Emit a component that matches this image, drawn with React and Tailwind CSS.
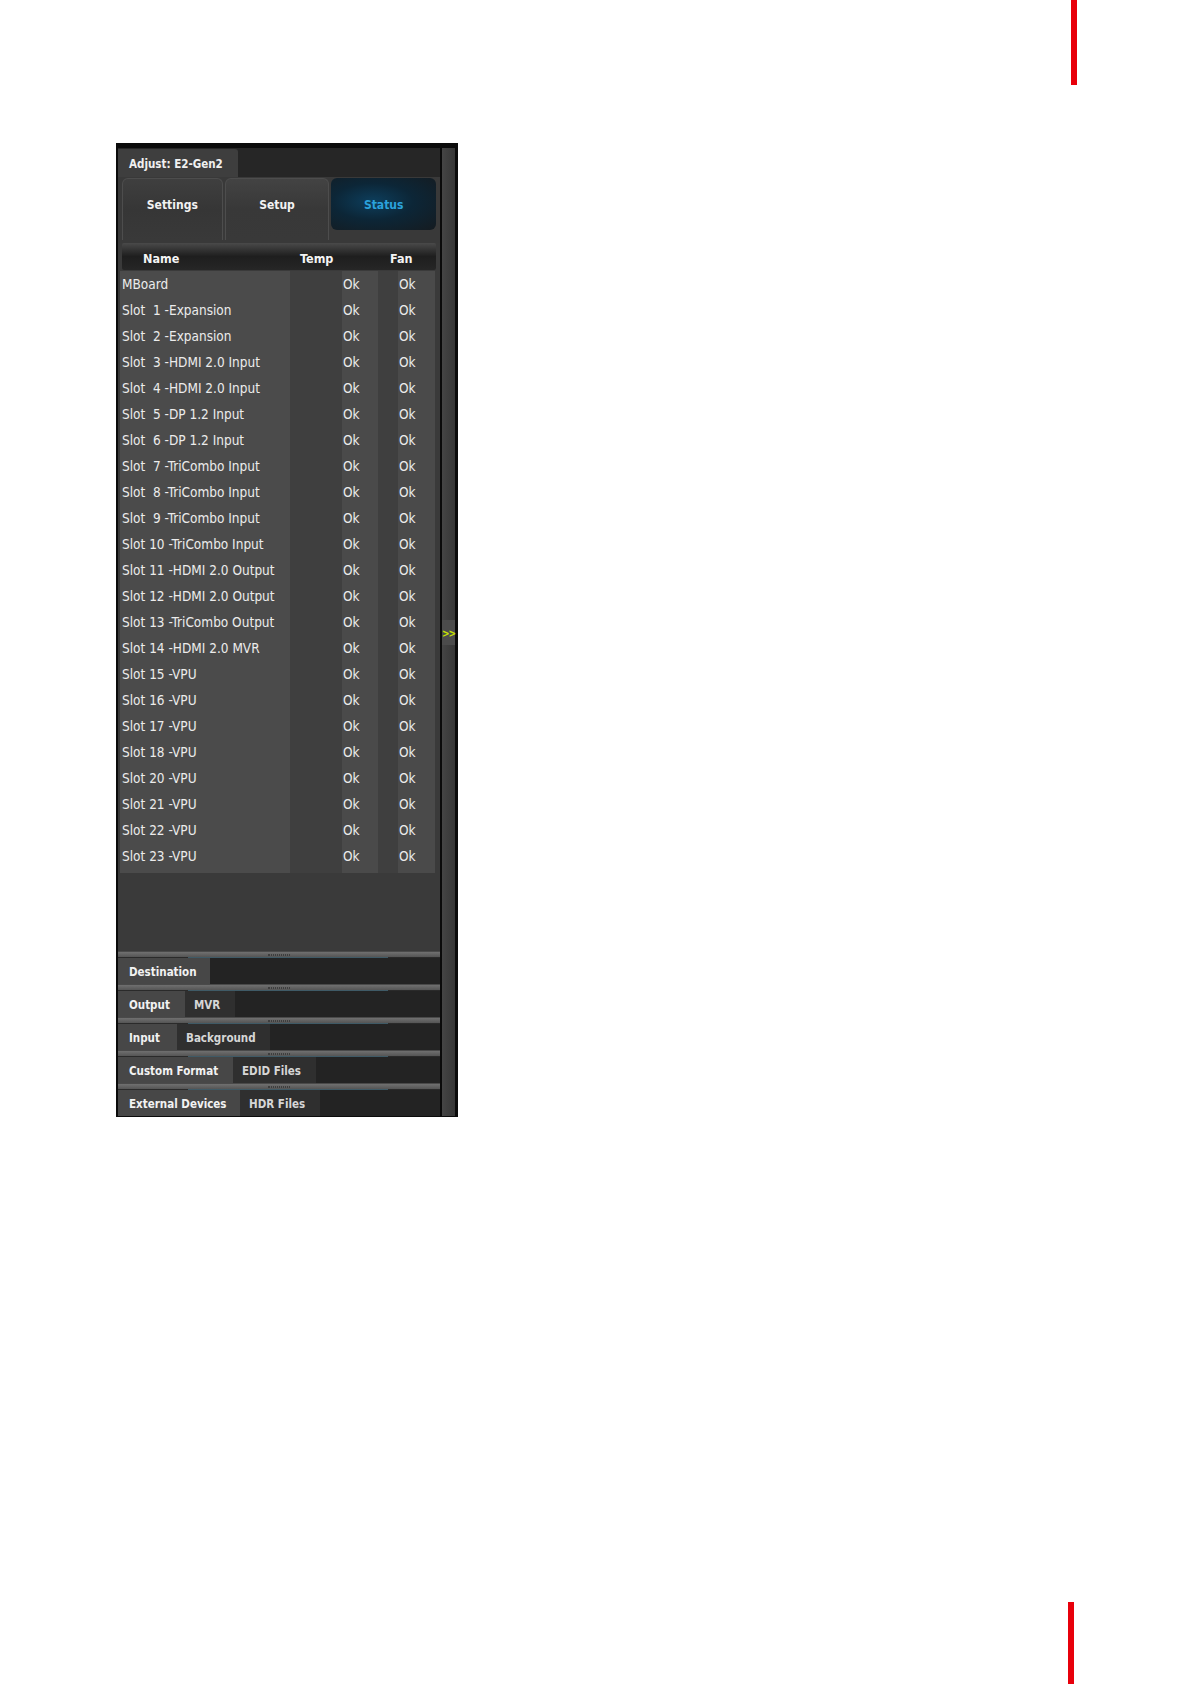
import React from "react";

const rows = [
  "MBoard",
  "Slot  1 -Expansion",
  "Slot  2 -Expansion",
  "Slot  3 -HDMI 2.0 Input",
  "Slot  4 -HDMI 2.0 Input",
  "Slot  5 -DP 1.2 Input",
  "Slot  6 -DP 1.2 Input",
  "Slot  7 -TriCombo Input",
  "Slot  8 -TriCombo Input",
  "Slot  9 -TriCombo Input",
  "Slot 10 -TriCombo Input",
  "Slot 11 -HDMI 2.0 Output",
  "Slot 12 -HDMI 2.0 Output",
  "Slot 13 -TriCombo Output",
  "Slot 14 -HDMI 2.0 MVR",
  "Slot 15 -VPU",
  "Slot 16 -VPU",
  "Slot 17 -VPU",
  "Slot 18 -VPU",
  "Slot 20 -VPU",
  "Slot 21 -VPU",
  "Slot 22 -VPU",
  "Slot 23 -VPU",
];

const font = { fontFamily: '"DejaVu Sans Condensed", "DejaVu Sans", Tahoma, sans-serif' };

function Splitter() {
  return (
    <div className="h-[7px] flex flex-col bg-[#2a2a2a]">
      <div className="h-[1px] bg-[#4a4a4a]" />
      <div className="h-[5px] bg-gradient-to-b from-[#707070] to-[#555555] flex justify-center items-center">
        <div className="w-[22px] h-[2px] border-y border-dotted border-[#3e3e3e]" />
      </div>
      <div className="h-[1px] flex">
        <div className="w-[70px] bg-[#2a2a2a]" />
        <div className="w-[200px] bg-[#3f5a66]" />
        <div className="flex-1 bg-[#2a2a2a]" />
      </div>
    </div>
  );
}

function TabRow({ tabs }) {
  return (
    <div className="h-[26px] flex bg-[#232323]">
      {tabs.map((t, i) => (
        <div
          key={t.label}
          className={
            i === 0
              ? "h-full flex items-center pt-[3px] bg-[#474747] text-[#f2f2f2] font-bold text-[11.5px] pl-[11px]"
              : "h-full flex items-center pt-[3px] bg-[#2f2f2f] text-[#d6d6d6] font-bold text-[11.5px] pl-[9px]"
          }
          style={{ width: t.w }}
        >
          {t.label}
        </div>
      ))}
    </div>
  );
}

export default function App() {
  return (
    <div className="w-[1191px] h-[1684px] bg-white flex flex-col" style={font}>
      <div className="ml-[1071px] w-[6px] h-[85px] bg-[#e8000b]" />

      <div className="ml-[116px] mt-[58px] w-[342px] h-[974px] bg-[#0b0b0b] flex pt-[5px] pl-[2px] pr-[3px] pb-[1px]">
        {/* main column */}
        <div className="w-[322px] flex flex-col bg-[#3a3a3a]">
          {/* adjust tab strip */}
          <div className="h-[29px] bg-[#262626] flex items-end">
            <div className="w-[120px] h-[28px] bg-[#3e3e3e] rounded-tr-[3px] flex items-center pt-[3px] pl-[11px] text-[11.5px] font-bold text-[#f0f0f0]">
              Adjust: E2-Gen2
            </div>
          </div>

          {/* main buttons */}
          <div className="h-[66px] flex px-[4px] pt-[1px] gap-[2px] bg-[#393939]">
            <div className="w-[101px] h-[62px] rounded-t-[6px] border-t border-x border-[#4d4d4d] bg-gradient-to-b from-[#3f3f3f] via-[#363636] to-[#393939] flex items-center justify-center pb-[10px] text-[12px] font-bold text-[#f2f2f2]">
              Settings
            </div>
            <div className="w-[105px] h-[62px] rounded-t-[6px] border-t border-x border-[#4d4d4d] bg-gradient-to-b from-[#434343] via-[#383838] to-[#393939] flex items-center justify-center pb-[10px] text-[12px] font-bold text-[#f2f2f2]">
              Setup
            </div>
            <div className="w-[105px] h-[52px] rounded-[6px] bg-[radial-gradient(ellipse_at_40%_45%,#0d3e5c_0%,#0c2637_45%,#151b20_100%)] flex items-center justify-center pt-[1px] text-[12px] font-bold text-[#2ba2dc]">
              Status
            </div>
          </div>

          {/* header */}
          <div className="mx-[4px] h-[27px] rounded-[2px] bg-gradient-to-b from-[#4a4a4a] via-[#1e1e1e] to-[#262626] flex items-center pt-[5px] text-[12.5px] font-bold text-[#f4f4f4]">
            <div className="w-[178px] pl-[21px]">Name</div>
            <div className="w-[90px]">Temp</div>
            <div>Fan</div>
          </div>

          {/* table */}
          <div className="flex pl-[2px] pt-[1px]">
            <div className="w-[170px] bg-[#4b4b4b] pb-[4px]">
              {rows.map((r) => (
                <div key={r} className="h-[26px] flex items-center pl-[2px] text-[13.5px] text-[#ececec] whitespace-pre">
                  {r}
                </div>
              ))}
            </div>
            <div className="w-[52px] bg-[#3f3f3f]" />
            <div className="w-[36px] bg-[#4a4a4a] pb-[4px]">
              {rows.map((r) => (
                <div key={r} className="h-[26px] flex items-center pl-[1px] text-[13.5px] text-[#ececec]">
                  Ok
                </div>
              ))}
            </div>
            <div className="w-[20px] bg-[#3f3f3f]" />
            <div className="w-[37px] bg-[#4a4a4a] pb-[4px]">
              {rows.map((r) => (
                <div key={r} className="h-[26px] flex items-center pl-[1px] text-[13.5px] text-[#ececec]">
                  Ok
                </div>
              ))}
            </div>
          </div>

          <div className="flex-1" />

          {/* bottom docked tabs */}
          <div className="flex flex-col">
            <Splitter />
            <TabRow tabs={[{ label: "Destination", w: 92 }]} />
            <Splitter />
            <TabRow tabs={[{ label: "Output", w: 67 }, { label: "MVR", w: 50 }]} />
            <Splitter />
            <TabRow tabs={[{ label: "Input", w: 59 }, { label: "Background", w: 93 }]} />
            <Splitter />
            <TabRow tabs={[{ label: "Custom Format", w: 115 }, { label: "EDID Files", w: 83 }]} />
            <Splitter />
            <TabRow tabs={[{ label: "External Devices", w: 122 }, { label: "HDR Files", w: 80 }]} />
          </div>
        </div>

        {/* inner border + scrollbar */}
        <div className="w-[2px] bg-[#0b0b0b]" />
        <div className="w-[13px] bg-gradient-to-r from-[#454545] to-[#363636] flex flex-col items-center">
          <div className="h-[472px]" />
          <div className="w-full h-[25px] bg-[#4b4b4b] flex items-center justify-center pt-[2px] text-[10px] font-bold text-[#c6e000] tracking-[-1px]">
            &gt;&gt;
          </div>
        </div>
      </div>

      <div className="ml-[1068px] mt-[485px] w-[6px] h-[82px] bg-[#e8000b]" />
    </div>
  );
}
